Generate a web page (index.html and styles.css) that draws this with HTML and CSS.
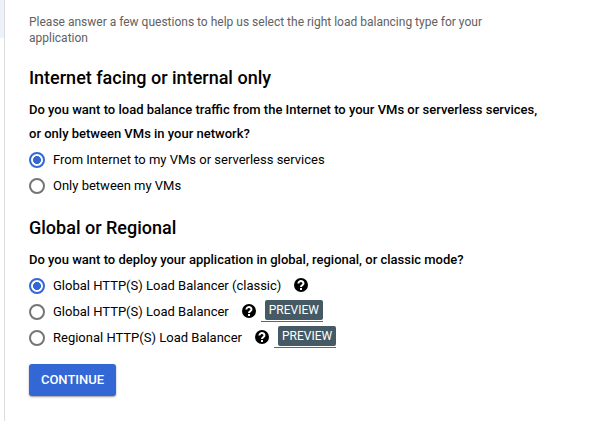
FILE: index.html
```
<!DOCTYPE html>
<html lang="en">
<head>
<meta charset="utf-8">
<title>Load balancing</title>
<link rel="stylesheet" href="styles.css">
</head>
<body>
<aside class="rail"><div class="rail-active"></div></aside>
<main class="panel">
  <p class="intro">Please answer a few questions to help us select the right load balancing type for your application</p>
  <section class="group">
    <h2>Internet facing or internal only</h2>
    <p class="question">Do you want to load balance traffic from the Internet to your VMs or serverless services, or only between VMs in your network?</p>
    <label class="option"><span class="radio on"></span><span class="text">From Internet to my VMs or serverless services</span></label>
    <label class="option"><span class="radio"></span><span class="text">Only between my VMs</span></label>
  </section>
  <section class="group second">
    <h2>Global or Regional</h2>
    <p class="question">Do you want to deploy your application in global, regional, or classic mode?</p>
    <label class="option"><span class="radio on"></span><span class="text">Global HTTP(S) Load Balancer (classic)</span><svg class="help" viewBox="0 0 14 14"><circle cx="7" cy="7" r="7"/><path d="M4.500 5.500a2.500 2.200 0 1 1 4 1.500C7.400 7.700 7 7.900 7 9M7 10v1.900"/></svg></label>
    <label class="option"><span class="radio"></span><span class="text">Global HTTP(S) Load Balancer</span><svg class="help" viewBox="0 0 14 14"><circle cx="7" cy="7" r="7"/><path d="M4.500 5.500a2.500 2.200 0 1 1 4 1.500C7.400 7.700 7 7.900 7 9M7 10v1.900"/></svg><span class="preview"><span class="chip">PREVIEW</span></span></label>
    <label class="option"><span class="radio"></span><span class="text">Regional HTTP(S) Load Balancer</span><svg class="help" viewBox="0 0 14 14"><circle cx="7" cy="7" r="7"/><path d="M4.500 5.500a2.500 2.200 0 1 1 4 1.500C7.400 7.700 7 7.900 7 9M7 10v1.900"/></svg><span class="preview"><span class="chip">PREVIEW</span></span></label>
  </section>
  <button class="continue">CONTINUE</button>
</main>
</body>
</html>
```
FILE: styles.css
```
* { box-sizing: border-box; }
body { margin: 0; height: 421px; display: flex; overflow: hidden; background: #fff; color: #000; font-family: Roboto, "Liberation Sans", sans-serif; font-size: 13px; }
.rail { width: 5px; flex: none; border-right: 1px solid #dcdcdc; }
.rail-active { height: 38px; background: #ecf2fc; }
.panel { padding: 14px 0 0 24px; }
.intro { margin: 0; width: 490px; font-size: 12px; line-height: 16px; color: #616161; }
h2 { margin: 20px 0 0; font-size: 18px; line-height: 24px; font-weight: 500; }
.question { margin: 8px 0 0; width: 520px; font-weight: 500; line-height: 24px; }
.option { display: flex; align-items: center; height: 26px; }
.group .question + .option { margin-top: 1px; }
.second h2 { margin-top: 17px; }
.radio { width: 16px; height: 16px; border: 2px solid #757575; border-radius: 50%; margin-right: 8px; flex: none; }
.radio.on { border-color: #3367d6; background: radial-gradient(circle, #3367d6 3.7px, transparent 4.3px); }
.text { white-space: nowrap; margin-bottom: 2px; }
.help { width: 14px; height: 14px; margin: 0 0 2px 13px; flex: none; }
.help path { fill: none; stroke: #fff; stroke-width: 2; }
.preview { height: 22px; margin: 0 0 2px 5px; padding-left: 4px; border-bottom: 1px solid #3367d6; display: flex; align-items: flex-start; }
.chip { height: 20px; padding: 0 4px; border-radius: 2px; background: #455a64; color: #fff; font-size: 12px; line-height: 20px; }
.continue { display: block; width: 87px; height: 32px; margin: 13px 0 0; padding: 0; border: 0; border-radius: 3px; background: #3367d6; color: #fff; font: 500 13px/32px Roboto, sans-serif; box-shadow: 0 1px 2px #0006; }
```
